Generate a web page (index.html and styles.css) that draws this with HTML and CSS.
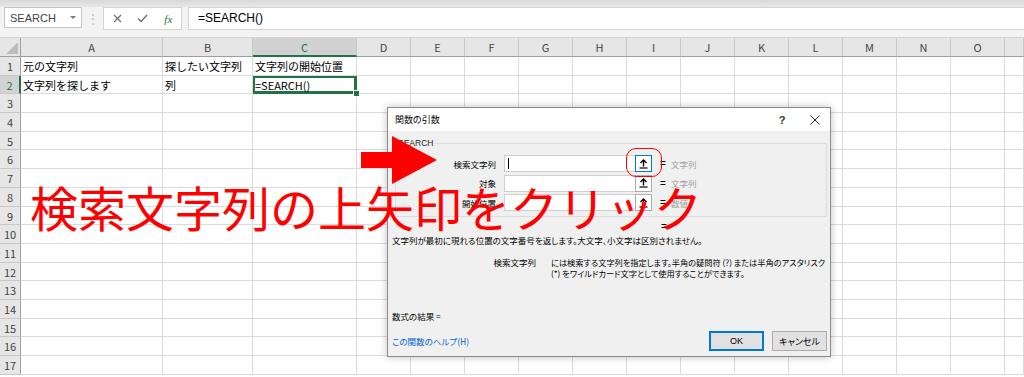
FILE: index.html
```html
<!DOCTYPE html>
<html lang="ja">
<head>
<meta charset="UTF-8">
<title>SEARCH</title>
<link rel="stylesheet" href="styles.css">
</head>
<body>

<div class="topbar">
  <div class="namebox"><span>SEARCH</span><span class="nb-arrow"></span></div>
  <div class="grip">⋮</div>
  <div class="fxbox">
    <span class="fx-slot">
      <svg width="9" height="9" viewBox="0 0 9 9"><path d="M1 1L8 8M8 1L1 8" stroke="#6f6f6f" stroke-width="1.2" fill="none"/></svg>
    </span>
    <span class="fx-slot">
      <svg width="11" height="9" viewBox="0 0 11 9"><path d="M1 4.5L4 7.5L10 1" stroke="#6f6f6f" stroke-width="1.3" fill="none"/></svg>
    </span>
    <span class="fx-slot fx-text">fx</span>
  </div>
  <div class="formula">=SEARCH()</div>
</div>

<div class="sheet" id="js_sheet">
  <div class="ch corner"></div>
  <div class="ch">A</div>
  <div class="ch">B</div>
  <div class="ch ch-sel">C</div>
  <div class="ch">D</div>
  <div class="ch">E</div>
  <div class="ch">F</div>
  <div class="ch">G</div>
  <div class="ch">H</div>
  <div class="ch">I</div>
  <div class="ch">J</div>
  <div class="ch">K</div>
  <div class="ch">L</div>
  <div class="ch">M</div>
  <div class="ch">N</div>
  <div class="ch">O</div>
  <div class="ch"></div>
</div>

<!-- 関数の引数ダイアログ -->
<div class="dialog">
  <div class="dlg-title">
    <span>関数の引数</span>
    <span class="dlg-help">?</span>
    <span class="dlg-close">
      <svg width="10" height="10" viewBox="0 0 10 10"><path d="M0.5 0.5L9.5 9.5M9.5 0.5L0.5 9.5" stroke="#222" stroke-width="1" fill="none"/></svg>
    </span>
  </div>

  <fieldset class="args">
    <legend>SEARCH</legend>
    <div class="arg">
      <span class="arg-label">検索文字列</span>
      <span class="arg-input"><span class="caret"></span></span>
      <span class="arg-btn arg-btn-focus"><svg width="9" height="10" viewBox="0 0 9 10"><path d="M4.5 1V7.5" stroke="#000" stroke-width="1.4"/><path d="M1.5 4L4.5 1L7.5 4" stroke="#000" stroke-width="1.4" fill="none"/><path d="M0.5 9H8.5" stroke="#000" stroke-width="1.2"/></svg></span>
      <span class="arg-eq">=</span>
      <span class="arg-hint">文字列</span>
    </div>
    <div class="arg">
      <span class="arg-label">対象</span>
      <span class="arg-input"></span>
      <span class="arg-btn"><svg width="9" height="10" viewBox="0 0 9 10"><path d="M4.5 1V7.5" stroke="#000" stroke-width="1.4"/><path d="M1.5 4L4.5 1L7.5 4" stroke="#000" stroke-width="1.4" fill="none"/><path d="M0.5 9H8.5" stroke="#000" stroke-width="1.2"/></svg></span>
      <span class="arg-eq">=</span>
      <span class="arg-hint">文字列</span>
    </div>
    <div class="arg">
      <span class="arg-label">開始位置</span>
      <span class="arg-input"></span>
      <span class="arg-btn"><svg width="9" height="10" viewBox="0 0 9 10"><path d="M4.5 1V7.5" stroke="#000" stroke-width="1.4"/><path d="M1.5 4L4.5 1L7.5 4" stroke="#000" stroke-width="1.4" fill="none"/><path d="M0.5 9H8.5" stroke="#000" stroke-width="1.2"/></svg></span>
      <span class="arg-eq">=</span>
      <span class="arg-hint">数値</span>
    </div>
  </fieldset>

  <div class="result-eq">=</div>
  <p class="desc">文字列が最初に現れる位置の文字番号を返します。大文字、小文字は区別されません。</p>

  <div class="arg-help">
    <span class="arg-help-name">検索文字列</span>
    <span class="arg-help-text">には検索する文字列を指定します。半角の疑問符 (?) または半角のアスタリスク<br>(*) をワイルドカード文字として使用することができます。</span>
  </div>

  <div class="dlg-foot">
    <div class="formula-result">数式の結果 =</div>
    <div class="foot-row">
      <span class="help-link">この関数のヘルプ(H)</span>
      <span class="btns">
        <span class="btn btn-ok">OK</span>
        <span class="btn">キャンセル</span>
      </span>
    </div>
  </div>
</div>

<!-- 説明用の注釈 -->
<svg class="red-arrow" width="76" height="48" viewBox="0 0 76 48"><polygon points="0,16 31,16 31,0 76,24 31,48 31,32 0,32" fill="#ff0000"/></svg>
<div class="focus-ring"></div>
<div class="callout">検索文字列の上矢印をクリック</div>

<script>
    // シートの行を作る
    var sheet = document.getElementById('js_sheet');
    var data = {
        1: ['元の文字列', '探したい文字列', '文字列の開始位置'],
        2: ['文字列を探します', '列', '=SEARCH()']
    };
    for (var r = 1; r <= 17; r++) {
        var rh = document.createElement('div');
        rh.className = r === 2 ? 'rh rh-sel' : 'rh';
        rh.textContent = r;
        sheet.appendChild(rh);
        for (var c = 0; c < 16; c++) {
            var cell = document.createElement('div');
            cell.className = 'cell';
            if (data[r] && data[r][c]) {
                cell.textContent = data[r][c];
            }
            if (r === 2 && c === 2) {
                cell.className = 'cell cell-sel';
            }
            sheet.appendChild(cell);
        }
    }
</script>
</body>
</html>
```

FILE: styles.css
```css
body {
  margin: 0;
  width: 1024px;
  height: 377px;
  overflow: hidden;
  position: relative;
  background: #fff;
  font-family: "Noto Sans CJK JP", sans-serif;
  color: #000;
}

/* 数式バー */
.topbar {
  height: 38px;
  box-sizing: border-box;
  padding: 7px 0 0 4px;
  display: flex;
  align-items: flex-start;
  background: linear-gradient(#d8d8d8, #e8e8e8 7px, #f3f3f3 7px);
  border-bottom: 1px solid #d4d4d4;
}
.namebox {
  width: 78px;
  height: 21px;
  box-sizing: border-box;
  background: #fff;
  border: 1px solid #c6c6c6;
  display: flex;
  align-items: center;
  padding-left: 5px;
  font-family: "Liberation Sans", sans-serif;
  font-size: 11px;
  color: #444;
}
.nb-arrow {
  margin-left: auto;
  margin-right: 5px;
  width: 0;
  height: 0;
  border-left: 3px solid transparent;
  border-right: 3px solid transparent;
  border-top: 3px solid #777;
}
.grip {
  width: 21px;
  text-align: center;
  color: #b8b8b8;
  font-size: 12px;
  line-height: 21px;
}
.fxbox {
  width: 79px;
  height: 23px;
  box-sizing: border-box;
  background: #fff;
  border: 1px solid #d4d4d4;
  display: flex;
  align-items: center;
  padding-left: 1px;
}
.fx-slot {
  width: 26.5px;
  display: flex;
  justify-content: center;
}
.fx-text {
  font-family: "Liberation Serif", serif;
  font-style: italic;
  font-size: 11px;
  color: #217346;
}
.formula {
  flex: 1;
  height: 23px;
  box-sizing: border-box;
  margin-left: 6px;
  background: #fff;
  border: 1px solid #d4d4d4;
  border-right: none;
  padding-left: 9px;
  font-family: "Liberation Sans", sans-serif;
  font-size: 12px;
  line-height: 21px;
}

/* シート */
.sheet {
  display: grid;
  grid-template-columns: 21px 142px 90px 104px repeat(12, 54px) 1fr;
  grid-template-rows: 19px repeat(17, 18.7px);
  font-size: 11px;
}
.ch {
  background: #e6e6e6;
  border-right: 1px solid #c8c8c8;
  border-bottom: 1px solid #9e9e9e;
  box-sizing: border-box;
  text-align: center;
  line-height: 18px;
  color: #444;
}
.corner {
  position: relative;
  border-right: 1px solid #9e9e9e;
}
.corner:after {
  content: '';
  position: absolute;
  right: 2px;
  bottom: 2px;
  border-left: 12px solid transparent;
  border-bottom: 12px solid #bdbdbd;
}
.ch-sel {
  background: #d2d2d2;
  color: #217346;
  border-bottom: 2px solid #217346;
}
.rh {
  background: #e6e6e6;
  border-right: 1px solid #9e9e9e;
  border-bottom: 1px solid #c8c8c8;
  box-sizing: border-box;
  text-align: center;
  line-height: 18px;
  color: #444;
}
.rh-sel {
  background: #d2d2d2;
  color: #217346;
  border-right: 2px solid #217346;
}
.cell {
  border-right: 1px solid #dadada;
  border-bottom: 1px solid #dadada;
  box-sizing: border-box;
  padding-left: 2px;
  line-height: 18px;
  white-space: nowrap;
}
.cell-sel {
  position: relative;
  box-shadow: inset 0 0 0 2px #217346;
  border-color: #217346;
}
.cell-sel:after {
  content: '';
  position: absolute;
  right: -4px;
  bottom: -4px;
  width: 5px;
  height: 5px;
  background: #217346;
  border: 1px solid #fff;
  z-index: 1;
}

/* ダイアログ */
.dialog {
  position: absolute;
  left: 387px;
  top: 107px;
  width: 444px;
  height: 250px;
  box-sizing: border-box;
  background: #f0f0f0;
  border: 1px solid #8c8c8c;
  box-shadow: 0 0 8px rgba(0, 0, 0, .25);
  display: flex;
  flex-direction: column;
  font-size: 8.5px;
  font-feature-settings: "palt";
  z-index: 2;
}
.dlg-title {
  height: 23px;
  flex: none;
  background: #fff;
  display: flex;
  align-items: center;
  padding-left: 7px;
  font-size: 9px;
}
.dlg-help {
  margin-left: auto;
  width: 12px;
  text-align: center;
  font-family: "Liberation Sans", sans-serif;
  font-size: 11px;
  font-weight: bold;
  color: #333;
}
.dlg-close {
  width: 10px;
  height: 10px;
  margin: 0 10px 0 22px;
  display: flex;
}
.args {
  margin: 6px 3px 0 7px;
  padding: 6px 0 5px 0;
  border: 1px solid #dcdcdc;
  min-width: 0;
}
.args legend {
  padding: 0 2px;
  line-height: 12px;
  font-family: "Liberation Sans", sans-serif;
  color: #222;
}
.arg {
  display: flex;
  align-items: center;
  height: 17px;
  margin-bottom: 2.5px;
}
.arg:last-child {
  margin-bottom: 0;
}
.arg-label {
  width: 100px;
  text-align: right;
}
.arg-input {
  width: 131px;
  height: 17px;
  box-sizing: border-box;
  margin-left: 8px;
  background: #fff;
  border: 1px solid #cfcfcf;
  border-right: none;
  display: flex;
  align-items: center;
}
.caret {
  width: 1px;
  height: 11px;
  margin-left: 3px;
  background: #000;
}
.arg-btn {
  width: 17px;
  height: 17px;
  box-sizing: border-box;
  background: #fff;
  border: 1px solid #adadad;
  display: flex;
  align-items: center;
  justify-content: center;
}
.arg-btn-focus {
  border-color: #0078d7;
}
.arg-eq {
  width: 11px;
  margin-left: 8px;
  font-family: "Liberation Sans", sans-serif;
  font-size: 10px;
}
.arg-hint {
  color: #a0a0a0;
}
.result-eq {
  margin: 4px 0 0 273px;
  line-height: 12px;
  font-family: "Liberation Sans", sans-serif;
  font-size: 10px;
}
.desc {
  margin: 1px 0 0 4px;
  line-height: 12px;
  white-space: nowrap;
}
.arg-help {
  display: flex;
  margin: 11px 0 0 4px;
  line-height: 10.5px;
  white-space: nowrap;
}
.arg-help-name {
  width: 144px;
  text-align: right;
}
.arg-help-text {
  margin-left: 15px;
  font-size: 8.2px;
}
.dlg-foot {
  margin-top: auto;
  padding: 0 3px 5px 4px;
}
.formula-result {
  line-height: 12px;
}
.foot-row {
  display: flex;
  align-items: center;
  justify-content: space-between;
  margin-top: 9px;
  height: 20px;
}
.help-link {
  color: #0066cc;
}
.btns {
  display: flex;
  gap: 8px;
}
.btn {
  width: 55px;
  height: 20px;
  box-sizing: border-box;
  background: #e1e1e1;
  border: 1px solid #adadad;
  display: flex;
  align-items: center;
  justify-content: center;
  font-size: 9px;
}
.btn-ok {
  border: 2px solid #0078d7;
  font-family: "Liberation Sans", sans-serif;
}

/* 赤い注釈 */
.red-arrow {
  position: absolute;
  left: 361px;
  top: 136px;
  z-index: 3;
}
.focus-ring {
  position: absolute;
  left: 626px;
  top: 148px;
  width: 36px;
  height: 29px;
  box-sizing: border-box;
  border: 1px solid #ff0000;
  border-radius: 10px;
  z-index: 3;
}
.callout {
  position: absolute;
  left: 30px;
  top: 182px;
  font-size: 48px;
  line-height: 48px;
  color: #ff0000;
  white-space: nowrap;
  z-index: 3;
}
```
